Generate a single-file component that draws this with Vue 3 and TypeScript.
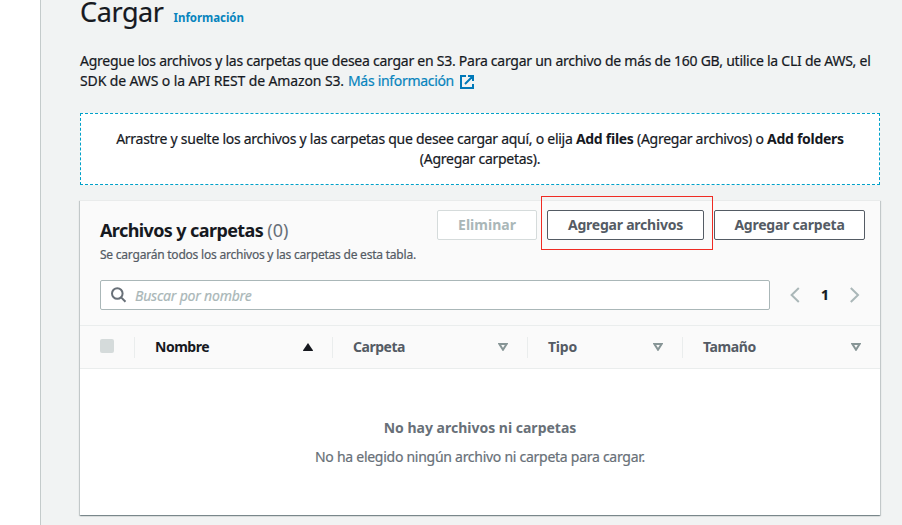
<script setup lang="ts">
interface Column {
  key: string
  label: string
  sorted: boolean
}

const columns: Column[] = [
  { key: 'name', label: 'Nombre', sorted: true },
  { key: 'folder', label: 'Carpeta', sorted: false },
  { key: 'type', label: 'Tipo', sorted: false },
  { key: 'size', label: 'Tamaño', sorted: false },
]
</script>

<template>
  <div class="shell">
    <aside class="side"></aside>
    <main class="main">
      <header class="title-row">
        <h1>Cargar</h1>
        <a class="info">Información</a>
      </header>

      <p class="intro">
        <span class="l1">Agregue los archivos y las carpetas que desea cargar en S3. Para cargar un archivo de más de 160 GB, utilice la CLI de AWS, el</span><br />
        <span class="l2">SDK de AWS o la API REST de Amazon S3.</span>
        <a class="more">Más información</a>
        <svg class="ext" width="14" height="14" viewBox="0 0 14 14" fill="none" stroke="currentColor" stroke-width="2">
          <path d="M6 1H1v12h12V9M8 1h5v5M13 1L5 9" />
        </svg>
      </p>

      <section class="drop">
        <div>
          Arrastre y suelte los archivos y las carpetas que desee cargar aquí, o elija <b>Add files</b>
          (Agregar archivos) o <b>Add folders</b>
        </div>
        <div class="d2">(Agregar carpetas).</div>
      </section>

      <section class="card">
        <div class="card-head">
          <div class="head-row">
            <div class="heading">
              <h2>Archivos y carpetas <span class="count">(0)</span></h2>
              <p class="sub">Se cargarán todos los archivos y las carpetas de esta tabla.</p>
            </div>
            <div class="actions">
              <button class="btn remove" disabled>Eliminar</button>
              <div class="marked"><button class="btn files">Agregar archivos</button></div>
              <button class="btn folder">Agregar carpeta</button>
            </div>
          </div>
          <div class="tools">
            <div class="search">
              <svg width="16" height="16" viewBox="0 0 16 16" fill="none" stroke="currentColor" stroke-width="2">
                <circle cx="6.3" cy="6.5" r="5.3" />
                <path d="M10.1 10.4L14.5 14.8" />
              </svg>
              <span>Buscar por nombre</span>
            </div>
            <nav class="pages">
              <svg width="10" height="16" viewBox="0 0 10 16" fill="none" stroke="currentColor" stroke-width="2">
                <path d="M8.8 1L1.6 8l7.2 7" />
              </svg>
              <span>1</span>
              <svg width="10" height="16" viewBox="0 0 10 16" fill="none" stroke="currentColor" stroke-width="2">
                <path d="M.8 1L8 8l-7.2 7" />
              </svg>
            </nav>
          </div>
        </div>
        <div class="thead">
          <div class="pick"><span class="box"></span></div>
          <div v-for="c in columns" :key="c.key" class="th" :class="[c.key, { sorted: c.sorted }]">
            <span>{{ c.label }}</span>
            <svg v-if="c.sorted" width="10" height="8" viewBox="0 0 10 8">
              <path d="M5 0L9.9 7.2V8H.1V7.2z" fill="currentColor" />
            </svg>
            <svg v-else width="10" height="8" viewBox="0 0 10 8">
              <path d="M1.4 1h7.2L5 6.7z" fill="none" stroke="currentColor" stroke-width="2" />
            </svg>
          </div>
        </div>
        <div class="empty">
          <b>No hay archivos ni carpetas</b>
          <p>No ha elegido ningún archivo ni carpeta para cargar.</p>
        </div>
      </section>
    </main>
  </div>
</template>

<style>
body {
  margin: 0;
  overflow: hidden;
}
</style>

<style scoped>
.shell {
  display: flex;
  box-sizing: border-box;
  width: 902px;
  height: 525px;
  overflow: hidden;
  background: #f1f3f3;
  font: 14px/20px "Noto Sans", "Open Sans", sans-serif;
  color: #16191f;
  -webkit-text-stroke: 0.2px currentColor;
}
b, h2, .btn, .th, .info {
  -webkit-text-stroke-width: 0;
}
.side {
  flex: 0 0 40px;
  background: #fff;
  border-right: 1px solid #c4cbcb;
}
.main {
  width: 800px;
  padding-left: 39px;
}
h1, h2, p {
  margin: 0;
}
svg {
  display: block;
  flex: none;
}
.title-row {
  display: flex;
  align-items: baseline;
  gap: 10px;
  height: 51px;
  margin-top: -6px;
}
h1 {
  font-size: 27px;
  font-weight: 400;
  line-height: 36px;
  letter-spacing: -0.4px;
}
.info {
  font-size: 11.5px;
  font-weight: 700;
  letter-spacing: -0.05px;
  color: #0784bd;
}
.intro {
  margin-top: 6px;
  height: 62px;
  white-space: nowrap;
}
.l1 { letter-spacing: -0.252px; }
.l2 { letter-spacing: -0.12px; }
.more {
  margin-left: 4px;
  letter-spacing: -0.31px;
  color: #0784bd;
}
.ext {
  display: inline-block;
  margin-left: 6px;
  vertical-align: -3px;
  color: #0078b8;
}
.drop {
  box-sizing: border-box;
  height: 72px;
  padding-top: 15px;
  border: 1px dashed #00a1c9;
  background: #fff;
  text-align: center;
  white-space: nowrap;
  letter-spacing: -0.27px;
}
.card {
  display: flex;
  flex-direction: column;
  box-sizing: border-box;
  height: 315px;
  margin-top: 15px;
  border-top: 1px solid #e9ebeb;
  background: #fff;
  box-shadow: 0 1px 1px 0 rgba(0, 28, 36, 0.3), 1px 1px 1px 0 rgba(0, 28, 36, 0.15), -1px 1px 1px 0 rgba(0, 28, 36, 0.15);
}
.card-head {
  height: 124px;
  padding: 0 15px 0 20px;
  background: #fafafa;
}
.head-row {
  display: flex;
  justify-content: space-between;
  height: 79px;
}
.heading {
  padding-top: 18px;
  white-space: nowrap;
}
h2 {
  font-size: 18px;
  line-height: 22px;
  letter-spacing: -0.6px;
}
.count {
  font-weight: 400;
  letter-spacing: 0;
  color: #687078;
}
.sub {
  margin-top: 6px;
  font-size: 12px;
  line-height: 16px;
  letter-spacing: -0.22px;
  color: #545b64;
}
.actions {
  display: flex;
  align-items: flex-start;
  gap: 10px;
  padding-top: 9px;
}
.btn {
  box-sizing: border-box;
  height: 30px;
  padding: 0;
  border: 1px solid #545b64;
  border-radius: 2px;
  background: #fff;
  color: #545b64;
  font: 700 14px/20px "Noto Sans", "Open Sans", sans-serif;
  letter-spacing: -0.22px;
}
.remove {
  width: 100px;
  border-color: #d5dbdb;
  color: #aab7b8;
  letter-spacing: 0;
}
.files { width: 157px; }
.folder { width: 151px; }
.marked {
  position: relative;
}
.marked::after {
  content: "";
  position: absolute;
  inset: -14px -9px -10px -6px;
  border: 1px solid #ef2b23;
  pointer-events: none;
}
.tools {
  display: flex;
  align-items: center;
}
.search {
  display: flex;
  align-items: center;
  gap: 8px;
  box-sizing: border-box;
  width: 670px;
  height: 30px;
  padding-left: 10px;
  border: 1px solid #aab7b8;
  border-radius: 2px;
  background: #fff;
  color: #687078;
}
.search span {
  padding-top: 2px;
  font-style: italic;
  letter-spacing: -0.2px;
  color: #aab7b8;
}
.pages {
  display: flex;
  align-items: center;
  justify-content: space-between;
  width: 70px;
  margin-left: 20px;
  color: #aab7b8;
}
.pages span {
  font-weight: 700;
  color: #16191f;
}
.thead {
  display: flex;
  align-items: center;
  box-sizing: border-box;
  height: 44px;
  border-top: 1px solid #eaeded;
  border-bottom: 1px solid #eaeded;
  background: #fafafa;
}
.pick {
  box-sizing: border-box;
  width: 54px;
  padding-left: 20px;
}
.box {
  display: block;
  width: 14px;
  height: 14px;
  margin-top: -2px;
  border-radius: 2px;
  background: #d5dbdb;
}
.th {
  display: flex;
  align-items: center;
  justify-content: space-between;
  box-sizing: border-box;
  height: 21px;
  padding: 0 19px 0 20px;
  border-left: 1px solid #eaeded;
  font-weight: 700;
  letter-spacing: -0.48px;
  color: #545b64;
}
.th svg {
  color: #879596;
}
.th.sorted,
.th.sorted svg {
  color: #16191f;
}
.name { width: 198px; }
.folder.th { width: 195px; }
.type { width: 155px; letter-spacing: -0.22px; }
.size { width: 198px; letter-spacing: -0.38px; }
.empty {
  padding-top: 49px;
  text-align: center;
  color: #687078;
}
.empty p {
  margin-top: 9px;
  letter-spacing: -0.27px;
}
</style>
